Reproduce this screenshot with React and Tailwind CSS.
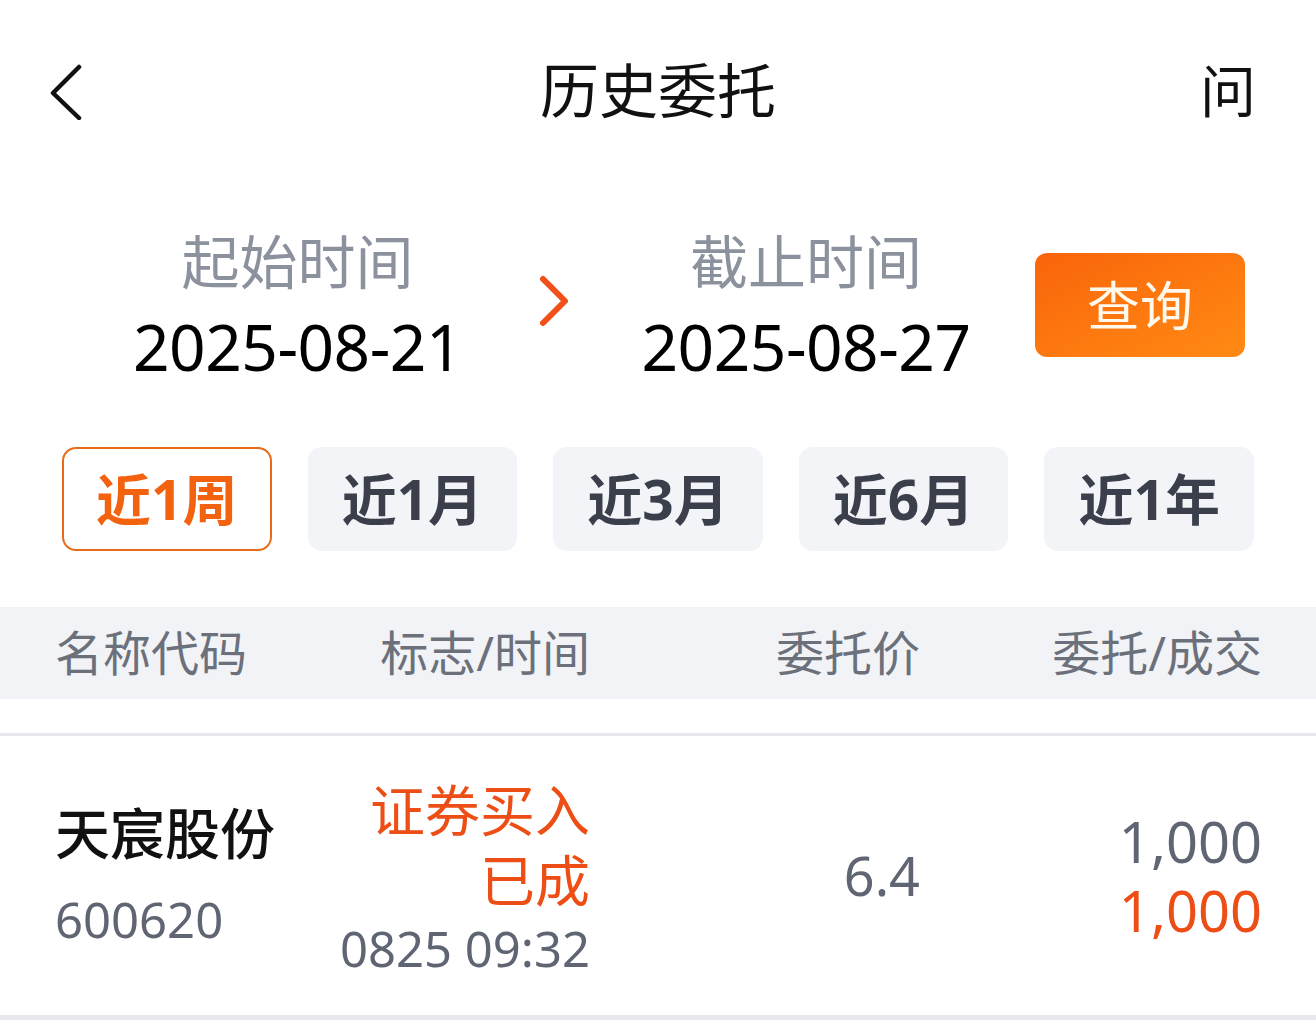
import React from "react";

const FONT = { fontFamily: '"Noto Sans", "Noto Sans CJK SC", sans-serif' };

const TABS = [
  { label: "近1周", active: true },
  { label: "近1月" },
  { label: "近3月" },
  { label: "近6月" },
  { label: "近1年" },
];

const COLS = "grid grid-cols-[290px_245px_330px_342px] pl-[55px] pr-[54px]";

export default function App() {
  return (
    <div className="w-[1316px] h-[1022px] bg-white overflow-hidden" style={FONT}>
      {/* header */}
      <header className="h-[180px] grid grid-cols-[1fr_auto_1fr] items-center pl-[46px] pr-[60px]">
        <svg width="40" height="60" viewBox="0 0 40 60" className="w-[40px]">
          <path d="M33 7 L7 33 L33 58" fill="none" stroke="#111" strokeWidth="4.5" strokeLinecap="round" strokeLinejoin="round" />
        </svg>
        <h1 className="text-[59px] leading-none text-[#111] translate-x-[7px]">历史委托</h1>
        <span className="justify-self-end text-[56px] leading-none text-[#111]">问</span>
      </header>

      {/* date range */}
      <section className="mt-[40px] h-[170px] flex items-center pl-[110px]">
        <div className="w-[375px] flex flex-col items-center">
          <span className="text-[58px] leading-[84px] text-[#8b919d]">起始时间</span>
          <span className="text-[64px] leading-[86px] text-black tracking-[-0.5px]">2025-08-21</span>
        </div>
        <div className="w-[135px] flex justify-center pb-[8px]">
          <svg width="36" height="56" viewBox="0 0 36 56">
            <path d="M8 6 L30 28 L8 50" fill="none" stroke="#f2501b" strokeWidth="6" strokeLinecap="round" strokeLinejoin="round" />
          </svg>
        </div>
        <div className="w-[372px] flex flex-col items-center">
          <span className="text-[58px] leading-[84px] text-[#8b919d]">截止时间</span>
          <span className="text-[64px] leading-[86px] text-black tracking-[-0.5px]">2025-08-27</span>
        </div>
        <button
          type="button"
          className="ml-[43px] w-[210px] h-[104px] rounded-[12px] bg-gradient-to-br from-[#fa640a] to-[#ff8a14] text-[#fff8ec] text-[53px] leading-none flex items-center justify-center"
        >
          查询
        </button>
      </section>

      {/* quick ranges */}
      <div className="mt-[57px] grid grid-cols-5 gap-[36px] px-[62px]">
        {TABS.map((t) => (
          <div
            key={t.label}
            className={
              t.active
                ? "h-[104px] rounded-[14px] border-2 border-[#ea6a1c] bg-white text-[#f2620f] flex items-center justify-center text-[55px] font-bold"
                : "h-[104px] rounded-[14px] bg-[#f3f4f8] text-[#3a3f4b] flex items-center justify-center text-[55px] font-bold"
            }
          >
            {t.label}
          </div>
        ))}
      </div>

      {/* table header */}
      <div className={`mt-[56px] h-[92px] bg-[#f1f3f7] items-center text-[48px] text-[#6b707b] ${COLS}`}>
        <span>名称代码</span>
        <span className="text-right">标志/时间</span>
        <span className="text-right">委托价</span>
        <span className="text-right">委托/成交</span>
      </div>

      <div className="mt-[34px] h-[3px] bg-[#e6e8ec]" />

      {/* row */}
      <div className={`h-[279px] items-center ${COLS}`}>
        <div className="flex flex-col">
          <span className="text-[55px] leading-[86px] text-[#111] font-medium">天宸股份</span>
          <span className="text-[49px] leading-[86px] text-[#5f6572]">600620</span>
        </div>
        <div className="flex flex-col items-end pt-[4px] whitespace-nowrap">
          <span className="text-[55px] leading-[70px] text-[#ec4e16]">证券买入</span>
          <span className="text-[55px] leading-[70px] text-[#ec4e16]">已成</span>
          <span className="text-[49px] leading-[66px] text-[#5f6572]">0825 09:32</span>
        </div>
        <div className="text-right text-[54px] text-[#5f6572]">6.4</div>
        <div className="flex flex-col items-end">
          <span className="text-[56px] leading-[69px] text-[#5f6572]">1,000</span>
          <span className="text-[56px] leading-[69px] text-[#ec4e16]">1,000</span>
        </div>
      </div>
      <div className="h-[5px] bg-[#e6e8ec]" />
    </div>
  );
}
